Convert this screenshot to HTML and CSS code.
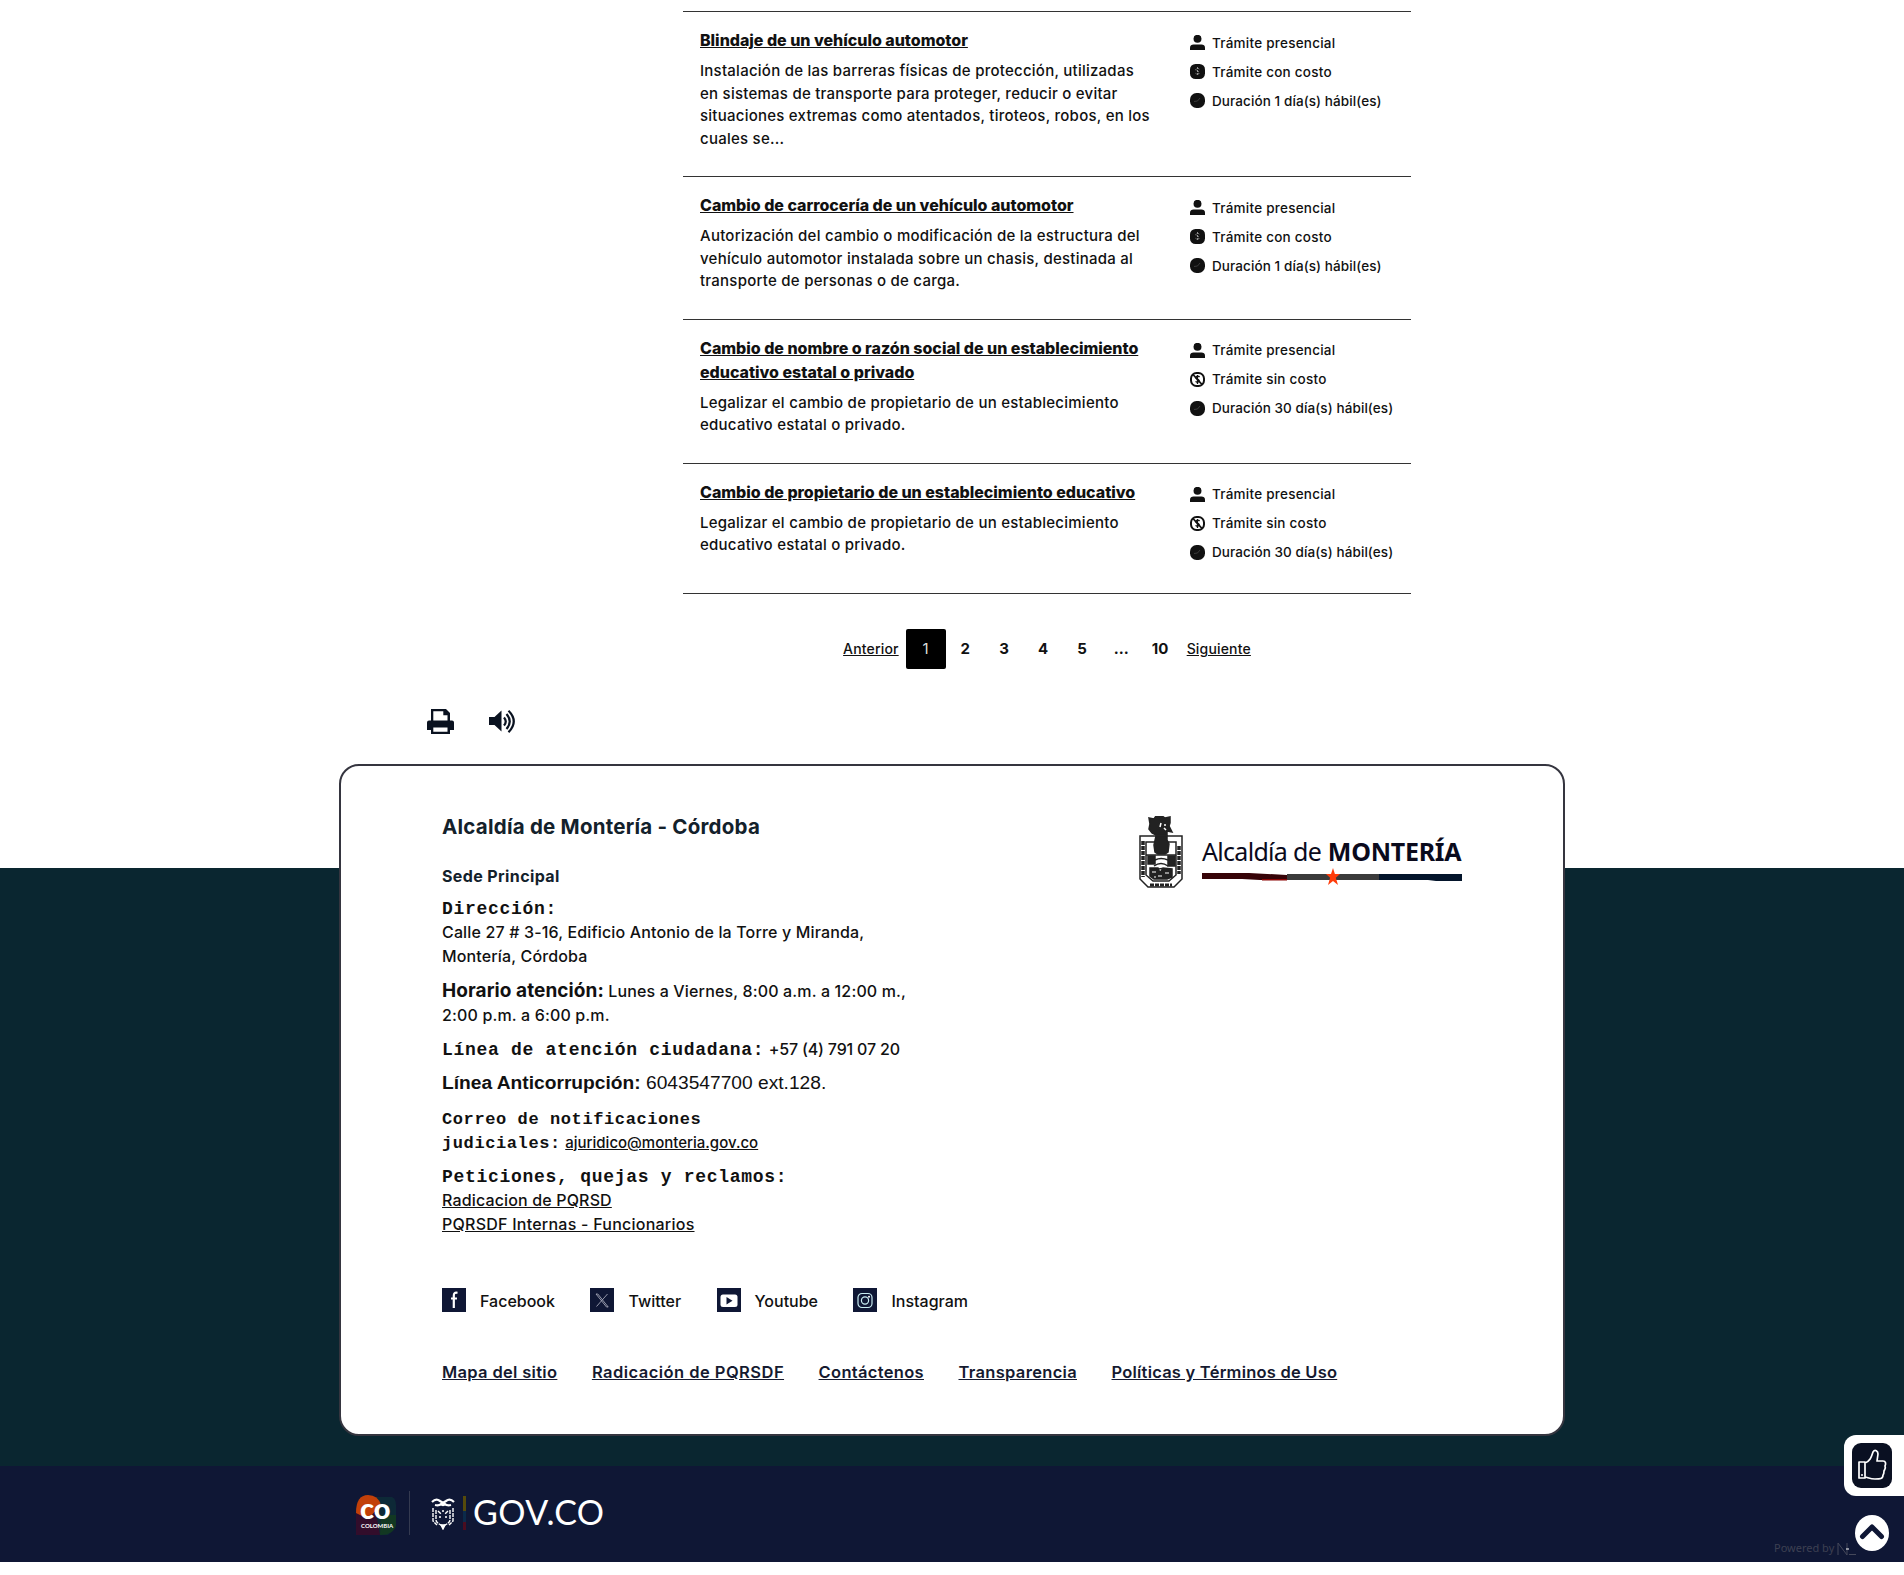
FILE: index.html
```html
<!DOCTYPE html>
<html lang="es">
<head>
<meta charset="utf-8">
<title>Trámites - Alcaldía de Montería</title>
<link rel="stylesheet" href="styles.css">
</head>
<body>
<svg width="0" height="0" class="defs">
  <symbol id="user" viewBox="0 0 15 15"><circle cx="7.500" cy="3.800" r="4"/><path d="M0 15v-2.500c0-2 1.600-3 3.500-3h8c2 0 3.500 1 3.500 3V15z"/></symbol>
  <symbol id="cost" viewBox="0 0 15 15"><rect width="15" height="15" rx="5.500"/><path d="M9.300 5.200C8.500 4 5.700 4.200 5.900 5.900c.2 1.500 3.200 1 3.300 2.900.1 1.700-2.700 1.900-3.600.6M7.500 3v9" fill="none" stroke="#aaa" stroke-width=".8" stroke-dasharray="2 1"/></symbol>
  <symbol id="free" viewBox="0 0 15 15"><rect x="1" y="1" width="13" height="13" rx="5.500" fill="#fff" stroke="#111" stroke-width="2"/><path d="M3 2.500l9 10" stroke="#111" stroke-width="1.800"/><path d="M9.600 5C8.500 3.600 5.700 4 5.900 5.900c.2 1.500 3.200 1 3.300 2.900.1 1.700-2.700 1.900-3.600.6M7.500 3v9" fill="none" stroke="#111" stroke-width="1.300"/></symbol>
  <symbol id="clock" viewBox="0 0 15 15"><rect width="15" height="15" rx="6.500"/><path d="M4 8.500l3.500-.5L10 5" fill="none" stroke="#444" stroke-width=".8"/></symbol>
</svg>
<main>
  <section class="list">
    <article class="item">
      <div class="info">
        <h3><a href="#">Blindaje de un vehículo automotor</a></h3>
        <p>Instalación de las barreras físicas de protección, utilizadas<br>en sistemas de transporte para proteger, reducir o evitar<br>situaciones extremas como atentados, tiroteos, robos, en los<br>cuales se...</p>
      </div>
      <ul class="meta">
        <li><svg><use href="#user"/></svg>Trámite presencial</li>
        <li><svg><use href="#cost"/></svg>Trámite con costo</li>
        <li><svg><use href="#clock"/></svg>Duración 1 día(s) hábil(es)</li>
      </ul>
    </article>
    <article class="item">
      <div class="info">
        <h3><a href="#">Cambio de carrocería de un vehículo automotor</a></h3>
        <p>Autorización del cambio o modificación de la estructura del<br>vehículo automotor instalada sobre un chasis, destinada al<br>transporte de personas o de carga.</p>
      </div>
      <ul class="meta">
        <li><svg><use href="#user"/></svg>Trámite presencial</li>
        <li><svg><use href="#cost"/></svg>Trámite con costo</li>
        <li><svg><use href="#clock"/></svg>Duración 1 día(s) hábil(es)</li>
      </ul>
    </article>
    <article class="item">
      <div class="info">
        <h3><a href="#">Cambio de nombre o razón social de un establecimiento<br>educativo estatal o privado</a></h3>
        <p>Legalizar el cambio de propietario de un establecimiento<br>educativo estatal o privado.</p>
      </div>
      <ul class="meta">
        <li><svg><use href="#user"/></svg>Trámite presencial</li>
        <li><svg><use href="#free"/></svg>Trámite sin costo</li>
        <li><svg><use href="#clock"/></svg>Duración 30 día(s) hábil(es)</li>
      </ul>
    </article>
    <article class="item">
      <div class="info">
        <h3><a href="#">Cambio de propietario de un establecimiento educativo</a></h3>
        <p>Legalizar el cambio de propietario de un establecimiento<br>educativo estatal o privado.</p>
      </div>
      <ul class="meta">
        <li><svg><use href="#user"/></svg>Trámite presencial</li>
        <li><svg><use href="#free"/></svg>Trámite sin costo</li>
        <li><svg><use href="#clock"/></svg>Duración 30 día(s) hábil(es)</li>
      </ul>
    </article>
  </section>
  <nav class="pager">
    <a class="step" href="#">Anterior</a>
    <b class="on">1</b><b>2</b><b>3</b><b>4</b><b>5</b><b>...</b><b>10</b>
    <a class="step" href="#">Siguiente</a>
  </nav>
  <div class="tools">
    <svg width="27" height="25" viewBox="0 0 27 25"><path d="M4 0h15l4 4v7.500h2q2 0 2 2V21h-4v4H4v-4H0v-7.500q0-2 2-2h2z"/><path d="M6.300 2.300h10v4h4.200v5.200H6.300zM6.300 18.500h14.200v4.200H6.300z" fill="#fff"/></svg>
    <svg width="27" height="25" viewBox="0 0 27 25"><path d="M0 8h5.500l7-6.500v21l-7-6.500H0z"/><path d="M15 8.500q3.500 4 0 8M17.500 5q6.500 7.500 0 15M19.500 1.800q10.500 10.500 0 21.400" fill="none" stroke="#0a1220" stroke-width="2.200"/></svg>
  </div>
</main>
<footer>
  <div class="card">
    <div class="contact">
      <h2>Alcaldía de Montería - Córdoba</h2>
      <h4>Sede Principal</h4>
      <p class="address"><strong class="mono">Dirección:</strong><br>Calle 27 # 3-16, Edificio Antonio de la Torre y Miranda,<br>Montería, Córdoba</p>
      <p><strong class="hours">Horario atención:</strong> Lunes a Viernes, 8:00 a.m. a 12:00 m.,<br>2:00 p.m. a 6:00 p.m.</p>
      <p><strong class="mono">Línea de atención ciudadana:</strong> <span class="phone">+57 (4) 791 07 20</span></p>
      <p class="arial"><strong>Línea Anticorrupción:</strong> 6043547700 ext.128.</p>
      <p class="mail"><strong class="mono small">Correo de notificaciones<br>judiciales:</strong> <a class="email" href="#">ajuridico@monteria.gov.co</a></p>
      <p><strong class="mono">Peticiones, quejas y reclamos:</strong><br><a href="#">Radicacion de PQRSD</a><br><a class="internal" href="#">PQRSDF Internas - Funcionarios</a></p>
    </div>
    <div class="brand">
      <svg width="44" height="72" viewBox="0 0 44 72" fill="none" stroke="#222" stroke-width="1.500">
        <path d="M1 20h42v43l-8 8H9l-8-8zM7 26h30v33l-7 6H14l-7-6zM7 39h30"/>
        <path d="M4 25v36M40 30v28" stroke-width="3.500" stroke-dasharray="4 1"/>
        <path d="M10 2l5 1 2-3h6l3 2 5-1v6l-1 3 3 6-5-1v4H17l-4-2-3-4 1-5z" fill="#222"/>
        <path d="M17 20h11v4l2 4-1 8-3 2h-7l-3-2-1-7z" fill="#222"/>
        <path d="M22 7l-1 4M25 12l2 2M26 8v2" stroke="#fff"/>
        <path d="M9 40h7v8H9zM29 40h7v10h-7zM11 52h8l2 5 3-5 9 1v8l-5 2H15l-4-3z" fill="#222"/>
        <path d="M16 44q6-3 13 0M15 50q7-5 14 0M17 54q6-3 11 0"/>
        <path d="M13 56h4M19 60h4M26 57h4M15 61h2" stroke="#fff" stroke-width="1.200"/>
        <path d="M11 69h22" stroke-width="3" stroke-dasharray="4 1"/>
      </svg>
      <div class="wordmark">
        <div class="name">Alcaldía de <b>MONTERÍA</b></div>
        <svg width="260" height="18" viewBox="0 0 260 18"><path d="M0 5h47l38 2v5H58L40 11H0z" fill="#360307"/><path d="M60 11h25v1.500H60z" fill="#8a0505"/><path d="M85 6h92v6H85z" fill="#3b3b3b"/><path d="M177 6h83v7h-26l-8-1h-49z" fill="#04152b"/><path d="M131 0l1.900 6H138l-4.200 3.800L136 17l-5-4-5 4 2.100-7.200L124 6h5z" fill="#ff3c0a"/></svg>
      </div>
    </div>
    <div class="social">
      <a><svg viewBox="0 0 24 24"><path d="M15.500 4.800c-3-.5-3.700.7-3.700 3V20M9 10.500h6" fill="none" stroke="#fff" stroke-width="2.200"/></svg>Facebook</a>
      <a><svg viewBox="0 0 24 24"><path d="M6 6l10.500 13h1.700L7.800 6zM17.500 6L6.500 18.500" fill="none" stroke="#b5b8c5" stroke-width=".8"/></svg>Twitter</a>
      <a><svg viewBox="0 0 24 24"><rect x="3.500" y="6.500" width="17" height="12.500" rx="2.500" fill="#fff"/><path d="M9.500 9l6 3.700-6 3.800z"/></svg>Youtube</a>
      <a><svg viewBox="0 0 24 24"><g fill="none" stroke="#c9edf2" stroke-width="1.200"><rect x="5" y="5.500" width="14" height="14" rx="4"/><circle cx="12" cy="12.500" r="3.600"/></g><circle cx="16" cy="8.700" r="1" fill="#fff"/></svg>Instagram</a>
    </div>
    <nav class="links">
      <a href="#">Mapa del sitio</a><a class="wide" href="#">Radicación de PQRSDF</a><a href="#">Contáctenos</a><a href="#">Transparencia</a><a class="tight" href="#">Políticas y Términos de Uso</a>
    </nav>
  </div>
</footer>
<div class="gov">
  <div class="co"><svg width="40" height="40" viewBox="0 0 40 40"><path d="M20 2h16q4 2 4 8v22l-8 8H20z" fill="#0d2937"/><path d="M25 20h15v10q-2 10-16 10z" fill="#123822"/><path d="M0 18h20l4 22H0z" fill="#320d2b"/><path d="M0 18Q0 0 12 0q10 0 13 10L12 24z" fill="#c24009"/></svg><b>co</b><i>COLOMBIA</i></div>
  <svg class="coat" width="26" height="32" viewBox="0 0 26 32" fill="none" stroke="#fff" stroke-width="1.400"><path d="M2 4q4-4 8-1l3 2 3-2q4-3 8 1M5 7q4 1 6-1 2 2 4 0 2 2 6 1" stroke-width="2.200"/><path d="M3 10v13l4 4M23 10v13l-4 4M6 12v10q0 3 7 6 7-3 7-6V12M8 13l3 3M18 13l-3 3M12 13h2M9 19h2M15 19h2" stroke-dasharray="4 1"/><path d="M11 27l2 4 2-4z" fill="#fff"/></svg>
  <i class="flag"></i>
  <span class="govco">GOV.CO</span>
  <div class="powered">Powered by <svg width="19" height="14" viewBox="0 0 19 14" fill="none" stroke="#45485a"><path d="M1 13V1l9 12V1M12 12.500h7"/><path d="M9 7h3" stroke="#fff"/></svg></div>
</div>
<div class="rate"><svg width="40" height="45" viewBox="0 0 40 45"><rect width="40" height="45" rx="9" fill="#0a1022"/><path d="M7 19h6v16H7zM13 20c5-2 6-5 8-11 2-3 5-1 5 2l-1 7h6c3 0 3 3 2 5 1 2 0 3-1 5 0 2 0 3-1 4 0 4-3 4-8 4-4 0-6-1-10-2z" fill="none" stroke="#fff" stroke-width="1.700" stroke-linejoin="round"/><circle cx="10" cy="32" r="1" fill="#fff"/></svg></div>
<a class="top" href="#"><svg width="34" height="36" viewBox="0 0 34 36"><ellipse cx="17" cy="18" rx="17" ry="18" fill="#fff"/><path d="M7.500 21.500L17 12l9.500 9.500" fill="none" stroke="#0f1735" stroke-width="5" stroke-linecap="round" stroke-linejoin="round"/></svg></a>
</body>
</html>
```
FILE: styles.css
```css
* { box-sizing: border-box; }
body { margin: 0; width: 1904px; height: 1575px; position: relative; overflow: hidden; background: #fff; color: #111; font-family: Inter, "Noto Sans", sans-serif; }
.defs { position: absolute; }
h2, h3, h4, p, ul { margin: 0; padding: 0; list-style: none; }
a { color: inherit; }

.list { width: 728px; margin-left: 683px; padding-top: 11px; }
.item { display: flex; border-top: 1px solid #333; padding: 16px 0 26px 17px; }
.item:last-child { border-bottom: 1px solid #333; }
.info { width: 490px; white-space: nowrap; }
.info h3 { font-size: 16px; line-height: 24px; font-weight: 800; letter-spacing: -.02px; margin-bottom: 8px; }
.info p { font-size: 15px; line-height: 22.5px; font-weight: 500; letter-spacing: .245px; }
.meta { font-size: 13.5px; font-weight: 500; white-space: nowrap; letter-spacing: .24px; }
.meta li { display: flex; align-items: center; gap: 7px; height: 29px; }
.meta li:last-child { letter-spacing: .09px; }
.meta svg { width: 15px; height: 15px; fill: #111; }

.pager { display: flex; align-items: center; justify-content: center; width: 728px; height: 40px; margin: 35px 0 0 683px; font-size: 15px; }
.pager b { width: 39px; text-align: center; font-weight: 700; }
.pager .on { width: 40px; line-height: 40px; border-radius: 2px; background: #000; color: #ddd; font-weight: 400; }
.step { margin: 0 7px; font-size: 14px; font-weight: 500; letter-spacing: .17px; }
.tools { display: flex; gap: 35px; padding: 40px 0 30px 427px; fill: #0a1220; }
.tools svg { display: block; }

footer { padding: 0 0 30px 339px; background: linear-gradient(#fff 104px, #0a2630 104px); }
.card { display: grid; grid-template-columns: 697px 1fr; grid-template-rows: 522px 64px 1fr; width: 1226px; height: 672px; padding: 0 101px; border: 2px solid #35353f; border-radius: 20px; background: #fff; }
.contact { font-size: 16px; font-weight: 500; letter-spacing: .15px; white-space: nowrap; }
.contact h2 { margin-top: 46px; font-size: 20.5px; line-height: 30px; font-weight: 700; letter-spacing: .23px; color: #13212b; }
.contact h4 { margin-top: 22px; font-size: 16px; line-height: 24px; font-weight: 700; letter-spacing: .38px; color: #13212b; }
.contact p { line-height: 24px; margin: 0 0 10px; }
.contact .address { margin: 8px 0 11px; }
.contact .mail { margin: 11px 0 9px; }
.mono { font-family: "Liberation Mono", monospace; font-size: 18px; line-height: 20px; letter-spacing: .71px; }
.small { font-size: 17px; letter-spacing: .6px; }
.hours { font-size: 19px; line-height: 20px; letter-spacing: .07px; }
.phone { letter-spacing: -.18px; }
.email { font-size: 15px; letter-spacing: 0; }
.internal { letter-spacing: .24px; }
.contact .arial { font: 19.2px/24px "Liberation Sans", sans-serif; letter-spacing: 0; }
.brand { display: flex; gap: 19px; padding: 50px 0 0 0; }
.name { font: 25px/34px "Noto Sans", sans-serif; letter-spacing: -.7px; white-space: nowrap; color: #0a0a1c; }
.name b { letter-spacing: -.25px; margin-left: 1px; }
.wordmark { padding-top: 18px; }
.wordmark svg { display: block; }
.social, .links { grid-column: 1 / -1; display: flex; white-space: nowrap; }
.social { gap: 35.5px; font-size: 16px; font-weight: 500; }
.social a { display: flex; gap: 14px; height: 24px; line-height: 27px; }
.social svg { width: 24px; height: 24px; background: #0f1735; fill: #0f1735; }
.links { gap: 34.5px; font-size: 16.5px; line-height: 40px; font-weight: 600; letter-spacing: .32px; color: #151a30; }
.wide { letter-spacing: .46px; }
.tight { letter-spacing: .22px; }

.gov { display: flex; height: 96px; background: #0f1735; padding-left: 356px; color: #fff; }
.co { position: relative; width: 54px; margin-top: 25px; height: 44px; border-right: 1px solid #343a50; }
.co svg { display: block; margin-top: 4px; }
.co b { position: absolute; left: 4px; top: 3px; font: 900 29px/28px Lato, sans-serif; }
.co i { position: absolute; left: 5px; top: 31px; font: 700 6px/8px Lato, sans-serif; }
.coat { margin: 32px 0 0 20px; }
.flag { width: 3px; height: 34px; margin: 30px 7px 0; background: linear-gradient(#554a0b 45%, #0b2a4a 45% 75%, #4a0d20 75%); }
.govco { font: 400 34px/44px Lato, sans-serif; letter-spacing: .5px; margin: 24px 0 0; }
.powered { position: absolute; left: 1774px; top: 1539px; font: 11px/18px "Noto Sans", sans-serif; color: #3d4052; }
.powered svg { vertical-align: middle; }
.rate { position: absolute; right: 0; top: 1435px; width: 60px; height: 61px; padding: 8px; border-radius: 12px 0 0 12px; background: #fff; }
.top { position: absolute; left: 1855px; top: 1515px; }
.rate svg, .top svg { display: block; }
```
